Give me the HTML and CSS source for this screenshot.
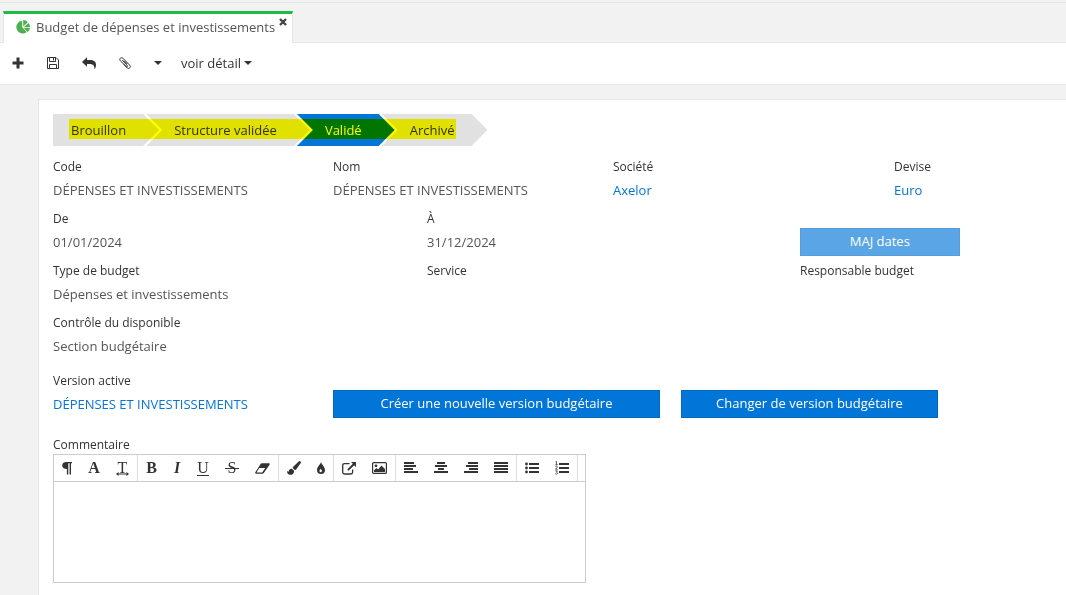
FILE: index.html
```html
<!DOCTYPE html>
<html lang="fr">
<head>
<meta charset="utf-8">
<title>Budget de dépenses et investissements</title>
<link rel="stylesheet" href="styles.css">
</head>
<body>
<nav class="tabs">
  <div class="tab">
    <svg class="tab-icon" width="14" height="14" viewBox="0 0 14 14"><path d="M6.200 .8V7.200L10.700 11.900A6.300 6.300 0 1 1 6.200 .8Z"/><path d="M7.200 0A6.500 6.500 0 0 1 11.900 2.200L7.200 6.300Z"/><path d="M12.500 2.900A6.500 6.500 0 0 1 14 7.200H7.600Z"/><path d="M7.800 8H14A6.500 6.500 0 0 1 11.700 12Z"/></svg>
    <a class="tab-title" href="#">Budget de dépenses et investissements</a>
    <button class="tab-close" aria-label="Fermer"><svg width="8" height="8" viewBox="0 0 8 8"><path d="M1 1L7 7M7 1L1 7" stroke="currentColor" stroke-width="2.400"/></svg></button>
  </div>
</nav>

<div class="toolbar">
  <button class="tool" aria-label="Nouveau"><svg width="12" height="12" viewBox="0 0 12 12"><path d="M4.500 .5h3v4h4v3h-4v4h-3v-4h-4v-3h4z"/></svg></button>
  <button class="tool" aria-label="Enregistrer"><svg class="line" width="12" height="12" viewBox="0 0 12 12"><path d="M.5 .5H9L11.500 3V11.500H.5ZM2.500 .5V4.500H8.500V.5M6.500 1V3.500M2.500 11.500V7.500H9.500V11.500"/></svg></button>
  <button class="tool" aria-label="Annuler"><svg width="14" height="12" viewBox="0 0 14 12"><path d="M5 .2V3H7.500C12 3 14 4.800 14 8c0 1.300-.5 2.800-1.200 4-.2.1-.4 0-.4-.2C12.500 8.600 11.200 7 7.500 7H5V9.800L0 5Z"/></svg></button>
  <button class="tool" aria-label="Pièces jointes"><svg class="line" width="12" height="12" viewBox="0 0 12 12"><path d="M3.300 3.200L8 8.200C9.200 9.500 8 10.300 7.100 9.400L1.200 3.700C-.2 2 2-.3 3.900 1.200L10.600 8.100C12.400 10.300 10 12.400 8.100 10.900L4.700 7.300M5 3.600L8.300 7"/></svg></button>
  <button class="tool" aria-label="Plus d'actions"><svg width="8" height="4" viewBox="0 0 8 4"><path d="M0 0H8L4 4Z"/></svg></button>
  <button class="tool tool-text">voir détail <svg width="8" height="4" viewBox="0 0 8 4"><path d="M0 0H8L4 4Z"/></svg></button>
</div>

<main class="content">
  <form class="panel">
    <div class="status">
      <div class="step first">Brouillon</div>
      <div class="step">Structure validée</div>
      <div class="step active">Validé</div>
      <div class="step">Archivé</div>
      <span class="marker"></span>
    </div>

    <div class="row four">
      <div class="field"><span class="label">Code</span><span class="value">DÉPENSES ET INVESTISSEMENTS</span></div>
      <div class="field"><span class="label">Nom</span><span class="value">DÉPENSES ET INVESTISSEMENTS</span></div>
      <div class="field"><span class="label">Société</span><a class="value" href="#">Axelor</a></div>
      <div class="field"><span class="label">Devise</span><a class="value" href="#">Euro</a></div>
    </div>
    <div class="row three">
      <div class="field"><span class="label">De</span><span class="value">01/01/2024</span></div>
      <div class="field"><span class="label">À</span><span class="value">31/12/2024</span></div>
      <div class="field end"><button type="button" class="btn btn-dates" disabled>MAJ dates</button></div>
    </div>
    <div class="row three">
      <div class="field"><span class="label">Type de budget</span><span class="value">Dépenses et investissements</span></div>
      <div class="field"><span class="label">Service</span></div>
      <div class="field"><span class="label">Responsable budget</span></div>
    </div>
    <div class="row three">
      <div class="field"><span class="label">Contrôle du disponible</span><span class="value">Section budgétaire</span></div>
    </div>
    <div class="row version">
      <div class="field"><span class="label">Version active</span><a class="value" href="#">DÉPENSES ET INVESTISSEMENTS</a></div>
      <div class="field end"><button type="button" class="btn">Créer une nouvelle version budgétaire</button></div>
      <div class="field end"><button type="button" class="btn">Changer de version budgétaire</button></div>
    </div>

    <div class="comment">
      <label class="label" for="comment">Commentaire</label>
      <div class="editor">
        <div class="editor-bar">
          <div class="group">
            <button type="button" aria-label="Style"><svg width="10" height="13" viewBox="0 0 10 13"><path d="M10 0V1.300H9V12.500H7.600V1.300H6.300V12.500H4.900V6.900C2 6.900 .2 5.500 .2 3.400 .2 1.200 2 0 4.500 0Z"/></svg></button>
            <button type="button" class="glyph w12" aria-label="Police">A</button>
            <button type="button" class="glyph w13 thin" aria-label="Taille">T<svg class="under" width="13" height="4" viewBox="0 0 13 4"><path d="M0 2L2.500 0V1.500H10.500V0L13 2L10.500 4V2.500H2.500V4Z"/></svg></button>
          </div>
          <div class="group">
            <button type="button" class="glyph w11" aria-label="Gras">B</button>
            <button type="button" class="glyph w8 italic" aria-label="Italique">I</button>
            <button type="button" class="glyph w12 thin" aria-label="Souligné">U<span class="under rule"></span></button>
            <button type="button" class="glyph w14 thin" aria-label="Barré">S<span class="strike"></span></button>
            <button type="button" aria-label="Effacer"><svg width="15" height="11" viewBox="0 0 15 11"><path fill-rule="evenodd" d="M6.500 .3H14Q15.200.5 14.700 1.600L8.800 10Q8.200 10.700 7.500 10.700H1Q-.3 10.400.3 9.200L5.600 .9ZM4.200 5.100L1.500 9.400H7.200L10.200 5.100Z"/></svg></button>
          </div>
          <div class="group">
            <button type="button" aria-label="Couleur"><svg width="14" height="14" viewBox="0 0 14 14"><path d="M13.600.4Q14.300 1.200 13.600 2.300L9.300 8.300Q8.500 9.200 7.500 8.700L6 7.300Q5.500 6.500 6.200 5.700L11.700.5Q12.800-.3 13.600.4ZM5.200 7.900L7.100 9.700C7.200 12.500 5.300 13.800 3.100 13.800 1.100 13.700 0 12.300 0 10L1.500 10.700C2.200 8.300 3.500 7.700 5.200 7.900Z"/></svg></button>
            <button type="button" aria-label="Surlignage"><svg width="8" height="12" viewBox="0 0 8 12"><path fill-rule="evenodd" d="M4 0C4.600 2.500 8 5 8 8A4 4 0 0 1 0 8C0 5 3.400 2.500 4 0ZM3.600 6.800C3.300 7.700 2.500 8 2.500 9A1.200 1.200 0 0 0 4.900 9C4.900 8 3.900 7.700 3.600 6.800Z"/></svg></button>
          </div>
          <div class="group">
            <button type="button" aria-label="Lien"><svg width="14" height="13" viewBox="0 0 14 13"><path fill="none" stroke="currentColor" stroke-width="1.300" d="M7.500 1.600H2.500Q.7 1.600.7 3.400V10.200Q.7 12 2.500 12H8.800Q10.600 12 10.600 10.200V7.500"/><path d="M9 0H14V5L12.200 3.300L6.500 8.700L5.200 7.400L10.800 1.800Z"/></svg></button>
            <button type="button" aria-label="Image"><svg width="15" height="12" viewBox="0 0 15 12"><rect x=".6" y=".6" width="13.800" height="10.800" rx="1" fill="none" stroke="currentColor" stroke-width="1.200"/><circle cx="4" cy="3.800" r="1.400"/><path d="M2 10V8.200L4.500 5.900L6 7.400L9.500 3.600L13 7V10Z"/></svg></button>
          </div>
          <div class="group">
            <button type="button" aria-label="Aligner à gauche"><svg width="14" height="12" viewBox="0 0 14 12"><path d="M0 0h10v2H0zM0 3h12v2H0zM0 6h9v2H0zM0 9h14v2H0z"/></svg></button>
            <button type="button" aria-label="Centrer"><svg width="14" height="12" viewBox="0 0 14 12"><path d="M3 0h8v2H3zM1 3h12v2H1zM4 6h6v2H4zM0 9h14v2H0z"/></svg></button>
            <button type="button" aria-label="Aligner à droite"><svg width="14" height="12" viewBox="0 0 14 12"><path d="M4 0h10v2H4zM2 3h12v2H2zM5 6h9v2H5zM0 9h14v2H0z"/></svg></button>
            <button type="button" aria-label="Justifier"><svg width="14" height="12" viewBox="0 0 14 12"><path d="M0 0h14v2H0zM0 3h14v2H0zM0 6h14v2H0zM0 9h14v2H0z"/></svg></button>
          </div>
          <div class="group">
            <button type="button" aria-label="Liste à puces"><svg width="14" height="12" viewBox="0 0 14 12"><path d="M4 1h10v2H4zM4 5h10v2H4zM4 9h10v2H4z"/><circle cx="1.500" cy="2" r="1.400"/><circle cx="1.500" cy="6" r="1.400"/><circle cx="1.500" cy="10" r="1.400"/></svg></button>
            <button type="button" aria-label="Liste numérotée"><svg width="14" height="14" viewBox="0 0 14 14"><path d="M4 2h10v2H4zM4 6h10v2H4zM4 10h10v2H4z"/><path fill="none" stroke="currentColor" stroke-width=".8" d="M.5 1L1.500.5V3.500M.3 3.700H2.700M.4 5.500Q1.500 4.700 2.300 5.600Q2.400 6.500.5 8.300H2.700M.4 9.900H2.400L1.400 11.200Q2.700 11.400 2.300 12.800Q1.300 13.600.3 12.900"/></svg></button>
          </div>
        </div>
        <textarea id="comment" class="editor-text"></textarea>
      </div>
    </div>
  </form>
</main>
</body>
</html>
```
FILE: styles.css
```css
* {
  box-sizing: border-box;
}

body {
  margin: 0;
  min-height: 100vh;
  display: flex;
  flex-direction: column;
  background: #f2f2f2;
  color: #333;
  font: 13px/20px "Open Sans", sans-serif;
}

button {
  margin: 0;
  padding: 0;
  border: 0;
  background: none;
  color: inherit;
  font: inherit;
}

svg {
  display: block;
  fill: currentColor;
}

.line {
  fill: none;
  stroke: currentColor;
}

a {
  color: #0275d8;
  text-decoration: none;
}

.tabs {
  display: flex;
  padding: 8px 4px 0 3px;
  margin-top: 2px;
  border-top: 1px solid #e5e5e5;
  border-bottom: 1px solid #e5e5e5;
}

.tab {
  display: flex;
  align-items: center;
  height: 32px;
  margin-bottom: -1px;
  padding: 0 5px 4px 12px;
  background: #fff;
  border: 1px solid #e5e5e5;
  border-top: 3px solid #21ba45;
  border-bottom: 0;
}

.tab-icon {
  color: #4caf50;
  margin-right: 6px;
}

.tab-title {
  color: #555;
}

.tab-close {
  align-self: flex-start;
  margin: 4px 0 0 4px;
  color: #444;
}

.toolbar {
  display: flex;
  gap: 1px;
  height: 42px;
  padding: 0 0 2px 1px;
  background: #fff;
  border-bottom: 1px solid #e5e5e5;
}

.tool {
  display: flex;
  align-items: center;
  gap: 3px;
  padding: 0 11px;
}

.tool-text {
  padding: 0 7px;
}

.content {
  flex: 1;
  display: flex;
  padding: 14px 0 0 38px;
}

.panel {
  flex: 1;
  padding: 14px 0 12px 14px;
  background: #fff;
  border: 1px solid #e5e5e5;
  border-width: 1px 0 0 1px;
}

.status {
  position: relative;
  display: flex;
  width: fit-content;
  margin-bottom: 11px;
}

.step {
  padding: 0 33px 0 28px;
  line-height: 32px;
  background: #e1e1e1;
  clip-path: polygon(0 0, calc(100% - 16px) 0, 100% 50%, calc(100% - 16px) 100%, 0 100%, 16px 50%);
}

.step + .step {
  margin-left: -13px;
}

.step.first {
  padding-left: 18px;
  clip-path: polygon(0 0, calc(100% - 16px) 0, 100% 50%, calc(100% - 16px) 100%, 0 100%);
}

.step.active {
  background: #0275d8;
  color: #fff;
}

.marker {
  position: absolute;
  inset: 5px 31px 7px 16px;
  background: #ff0;
  mix-blend-mode: multiply;
}

.row {
  display: grid;
  min-height: 52px;
}

.four {
  grid-template-columns: 280fr 280fr 281fr 172fr;
}

.three {
  grid-template-columns: 374fr 373fr 266fr;
}

.version {
  grid-template-columns: 259fr 327fr 257fr 107fr;
  column-gap: 21px;
  margin-top: 6px;
}

.field {
  display: flex;
  flex-direction: column;
  align-items: flex-start;
  min-width: 0;
}

.field.end {
  padding-top: 19px;
}

.label {
  display: block;
  font-size: 12px;
  font-weight: 500;
  line-height: 19px;
  color: #333;
}

.value {
  line-height: 28px;
  white-space: nowrap;
}

span.value {
  color: #555;
}

.btn {
  width: 100%;
  height: 28px;
  padding-bottom: 2px;
  background: #0275d8;
  border: 1px solid #0267bf;
  color: #fff;
}

.btn:disabled {
  opacity: .65;
}

.btn-dates {
  width: 60%;
}

.comment {
  max-width: 533px;
  margin-top: 12px;
}

.editor {
  border: 1px solid #ccc;
}

.editor-bar {
  display: flex;
  height: 27px;
  border-bottom: 1px solid #ccc;
}

.group {
  display: flex;
  border-right: 1px solid #ddd;
}

.group button {
  position: relative;
  display: flex;
  align-items: center;
  justify-content: center;
  padding: 0 8px;
}

.group .glyph {
  padding: 0;
  font: bold 16px/26px "Liberation Serif", serif;
}

.group .thin {
  font-weight: normal;
}

.group .italic {
  font-style: italic;
}

.w8 { width: 24px; }
.w11 { width: 27px; }
.w12 { width: 28px; }
.w13 { width: 29px; }
.w14 { width: 30px; }

.under {
  position: absolute;
  left: 8px;
  right: 8px;
  bottom: 5px;
}

.rule {
  height: 1px;
  background: #333;
}

.strike {
  position: absolute;
  left: 8px;
  right: 8px;
  top: 13px;
  height: 1px;
  background: #333;
}

.editor-text {
  display: block;
  width: 100%;
  height: 100px;
  padding: 8px;
  border: 0;
  outline: 0;
  resize: none;
  font: inherit;
}
```
